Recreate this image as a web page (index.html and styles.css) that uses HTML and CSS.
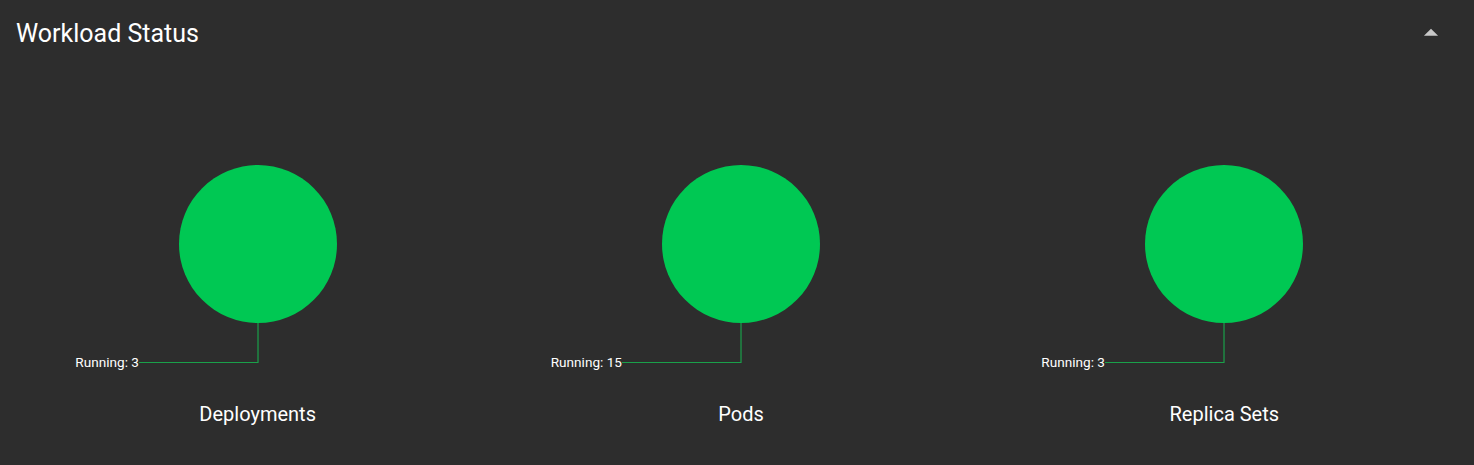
FILE: index.html
```html
<!DOCTYPE html>
<html>
<head>
<meta charset="utf-8">
<link rel="stylesheet" href="styles.css">
</head>
<body>
<section class="panel">
  <header class="panel-header">
    <h2 class="panel-title">Workload Status</h2>
    <svg class="caret" viewBox="0 0 24 24" width="34" height="34"><path d="M7 14l5-5 5 5z"/></svg>
  </header>
  <div class="charts">
    <div class="chart">
      <svg class="pie" viewBox="0 0 320 316" width="320" height="316">
        <circle cx="160" cy="178" r="79" class="slice"/>
        <polyline points="160,257 160,296.5 41,296.5" class="leader"/>
        <text x="41" y="296" class="label">Running: 3</text>
      </svg>
      <div class="chart-title">Deployments</div>
    </div>
    <div class="chart">
      <svg class="pie" viewBox="0 0 320 316" width="320" height="316">
        <circle cx="160" cy="178" r="79" class="slice"/>
        <polyline points="160,257 160,296.5 41,296.5" class="leader"/>
        <text x="41" y="296" class="label">Running: 15</text>
      </svg>
      <div class="chart-title">Pods</div>
    </div>
    <div class="chart">
      <svg class="pie" viewBox="0 0 320 316" width="320" height="316">
        <circle cx="160" cy="178" r="79" class="slice"/>
        <polyline points="160,257 160,296.5 41,296.5" class="leader"/>
        <text x="41" y="296" class="label">Running: 3</text>
      </svg>
      <div class="chart-title">Replica Sets</div>
    </div>
  </div>
</section>
</body>
</html>
```

FILE: styles.css
```css
html, body {
  margin: 0;
  padding: 0;
  background: #2d2d2d;
  font-family: Roboto, "Liberation Sans", sans-serif;
  color: #ffffff;
}

.panel {
  width: 1474px;
  height: 465px;
  background: #2d2d2d;
}

.panel-header {
  display: flex;
  align-items: center;
  justify-content: space-between;
  height: 66px;
  padding: 0 26px 0 16px;
  box-sizing: border-box;
}

.panel-title {
  margin: 0;
  font-size: 25px;
  font-weight: 400;
  color: #ffffff;
  line-height: 34px;
  padding-top: 1px;
}

.caret {
  fill: #c8c8c8;
}

.charts {
  display: grid;
  grid-template-columns: repeat(3, 1fr);
  padding: 0 8px 0 16px;
}

.chart {
  display: flex;
  flex-direction: column;
  align-items: center;
}

.pie {
  display: block;
  overflow: visible;
}

.slice {
  fill: #00c853;
}

.leader {
  fill: none;
  stroke: #1aa04a;
  stroke-width: 1.2;
}

.label {
  fill: #ffffff;
  font-family: Roboto, "Liberation Sans", sans-serif;
  font-size: 13.6px;
  text-anchor: end;
  dominant-baseline: central;
}

.chart-title {
  margin-top: 19px;
  font-size: 20px;
  line-height: 26px;
  color: #ffffff;
}
```
